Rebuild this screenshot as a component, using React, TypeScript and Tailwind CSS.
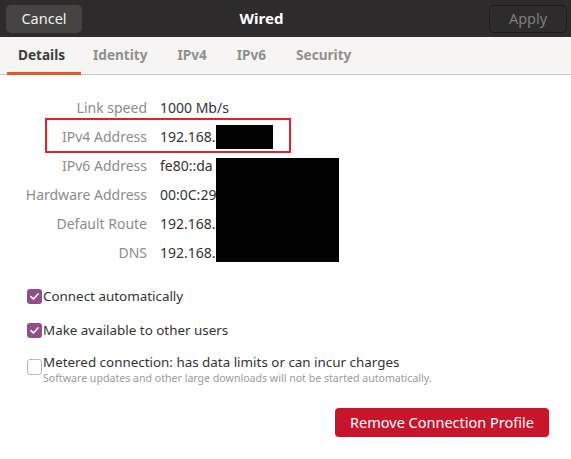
import React from "react";

const font = { fontFamily: '"Noto Sans", "Open Sans", sans-serif' };

function Check({ checked }: { checked: boolean }) {
  if (checked) {
    return (
      <span className="flex h-[15px] w-[15px] shrink-0 items-center justify-center rounded-[3px] bg-[#924d8b]">
        <svg width="11" height="11" viewBox="0 0 11 11">
          <path d="M2 5.6 L4.4 8 L9 3" stroke="white" strokeWidth="1.7" fill="none" strokeLinecap="round" strokeLinejoin="round" />
        </svg>
      </span>
    );
  }
  return <span className="block h-[16px] w-[15px] shrink-0 rounded-[3px] border border-[#b8b8b8] bg-white" />;
}

const rows: [string, string][] = [
  ["Link speed", "1000 Mb/s"],
  ["IPv4 Address", "192.168."],
  ["IPv6 Address", "fe80::da"],
  ["Hardware Address", "00:0C:29"],
  ["Default Route", "192.168."],
  ["DNS", "192.168."],
];

export default function App() {
  return (
    <div className="relative h-[459px] w-[571px] overflow-hidden bg-white text-[14px]" style={font}>
      {/* header bar */}
      <div className="flex h-[37px] items-center bg-[#2d2b2c] pl-[6px] pr-[4px]">
        <button className="flex h-[28px] w-[76px] items-center justify-center rounded-[5px] bg-[#464442] text-[14.5px] text-[#eeeeec]">
          Cancel
        </button>
        <div className="flex-1 pr-[48px] text-center text-[15px] font-bold text-white">Wired</div>
        <button className="flex h-[28px] w-[78px] items-center justify-center rounded-[5px] border border-[#1e1d1d] bg-[#2d2b2c] text-[14.5px] text-[#7f7e7d]">
          Apply
        </button>
      </div>

      {/* tabs */}
      <div className="flex h-[38px] items-stretch border-b border-[#cfcdcb] bg-[#f6f5f4] pl-[7px] text-[13.6px] font-bold">
        <div className="relative flex w-[74px] items-center pl-[11px] text-[#3d3d3d]">
          Details
          <span className="absolute bottom-[-1px] left-0 h-[3px] w-[74px] bg-[#e95420]" />
        </div>
        <div className="ml-[12px] flex items-center gap-[30px] text-[#8f8f8f]">
          <span>Identity</span>
          <span>IPv4</span>
          <span>IPv6</span>
          <span>Security</span>
        </div>
      </div>

      {/* details */}
      <div className="flex flex-col pt-[18px]">
        {rows.map(([k, v]) => (
          <div key={k} className="flex h-[29px] items-center">
            <div className="w-[147px] text-right text-[#8c8c8c]">{k}</div>
            <div className="pl-[13px] text-[#333333]">{v}</div>
          </div>
        ))}
      </div>

      {/* checkboxes */}
      <div className="mt-[19px] flex flex-col pl-[27px] text-[13.4px]">
        <div className="flex h-[20px] items-center gap-[1px]">
          <Check checked />
          <span className="text-[#333333]">Connect automatically</span>
        </div>
        <div className="mt-[14px] flex h-[20px] items-center gap-[1px]">
          <Check checked />
          <span className="text-[#333333]">Make available to other users</span>
        </div>
        <div className="mt-[13px] flex items-start gap-[1px]">
          <span className="mt-[6px]">
            <Check checked={false} />
          </span>
          <div className="flex flex-col">
            <span className="leading-[19px] text-[#333333]">Metered connection: has data limits or can incur charges</span>
            <span className="text-[10.6px] leading-[13px] text-[#9a9a9a]">
              Software updates and other large downloads will not be started automatically.
            </span>
          </div>
        </div>
      </div>

      <div className="mt-[23px] flex justify-end pr-[22px]">
        <button className="flex h-[29px] w-[214px] items-center justify-center rounded-[4px] bg-[#c7162b] text-[14.5px] text-white">
          Remove Connection Profile
        </button>
      </div>

      {/* annotation + redactions */}
      <div className="absolute left-[45px] top-[118px] h-[35px] w-[246px] border-2 border-[#e3202b]" />
      <div className="absolute left-[216px] top-[125px] h-[24px] w-[57px] bg-black" />
      <div className="absolute left-[216px] top-[158px] h-[104px] w-[123px] bg-black" />
    </div>
  );
}
